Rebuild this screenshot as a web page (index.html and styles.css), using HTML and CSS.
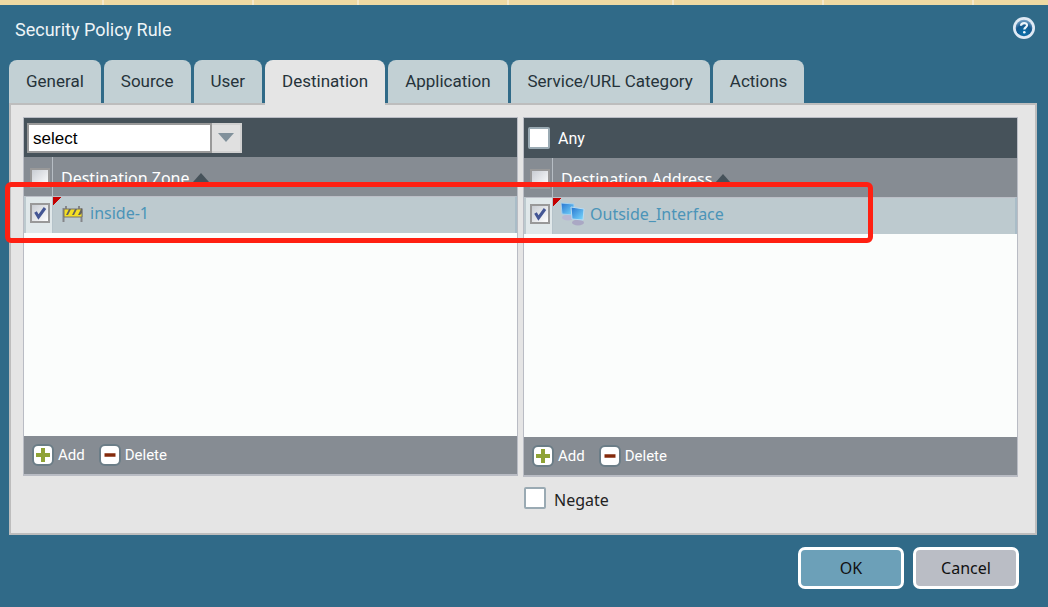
FILE: index.html
```html
<!DOCTYPE html>
<html lang="en">
<head>
<meta charset="utf-8">
<title>Security Policy Rule</title>
<link rel="stylesheet" href="styles.css">
</head>
<body>
<div class="strip"><i class="c1"></i><i class="c2"></i><i class="c3"></i><i class="c2"></i><i class="c4"></i><i class="c2"></i><i class="c2"></i><i class="rest"></i></div>
<main class="dialog">
  <header class="title-bar">
    <h1 class="title">Security Policy Rule</h1>
    <button class="help" type="button" aria-label="Help">
      <svg width="24" height="24" viewBox="0 0 24 24" aria-hidden="true">
        <defs><radialGradient id="hg" cx=".5" cy=".8" r=".8"><stop offset="0" stop-color="#0873ae"/><stop offset=".6" stop-color="#17588c"/><stop offset="1" stop-color="#7fa9cc"/></radialGradient></defs>
        <circle cx="12" cy="12" r="11" fill="#dfe9f4"/><circle cx="12" cy="12" r="8.3" fill="url(#hg)"/>
        <path d="M9 9.700c.2-3.600 6.300-3.400 6-.2-.2 1.900-2.700 1.900-2.700 4" fill="none" stroke="#eef6fc" stroke-width="2.200"/><circle cx="12.300" cy="16.300" r="1.300" fill="#eef6fc"/>
      </svg>
    </button>
  </header>
  <nav class="tabs" role="tablist">
    <button class="tab" role="tab" type="button">General</button>
    <button class="tab" role="tab" type="button">Source</button>
    <button class="tab" role="tab" type="button">User</button>
    <button class="tab active" role="tab" type="button" aria-selected="true">Destination</button>
    <button class="tab" role="tab" type="button">Application</button>
    <button class="tab" role="tab" type="button">Service/URL Category</button>
    <button class="tab" role="tab" type="button">Actions</button>
  </nav>
  <section class="panel">
    <div class="column">
      <div class="grid">
        <div class="toolbar">
          <div class="combo">
            <input class="combo-text" type="text" value="select" aria-label="Zone mode">
            <button class="combo-arrow" type="button" aria-label="Open list"><svg width="16" height="9" viewBox="0 0 16 9"><path d="M0 0h16L8 9z" fill="#81919b"/></svg></button>
          </div>
        </div>
        <table class="list">
          <thead><tr><th class="pick"><input class="check small" type="checkbox" aria-label="Select all zones"></th><th class="name">Destination Zone<svg class="sort" width="16" height="9" viewBox="0 0 16 9"><path d="M0 9L8 0l8 9z" fill="#46525a"/></svg></th></tr></thead>
          <tbody><tr><td class="pick"><input class="check small" type="checkbox" checked aria-label="Select inside-1"></td><td class="name"><div class="entry">
            <svg width="24" height="20" viewBox="0 0 24 20" aria-hidden="true"><path d="M2.500 5v14M20.500 5v14M5 3v4M18 3v4" stroke="#85868a" stroke-width="2" fill="none"/><path d="M3 6h18v8H3z" fill="#f5df22" stroke="#77736a"/><path d="M5 12l3-6h2l-3 6zM11 12l3-6h2l-3 6zM17 12l3-6h1v4l-2 2z" fill="#65635c"/></svg>
            <a class="link" href="#">inside-1</a></div></td></tr></tbody>
        </table>
        <div class="blank"></div>
        <div class="actions">
          <button class="action" type="button"><svg width="24" height="24" viewBox="0 0 24 24"><rect x="2" y="2" width="20" height="20" rx="5" fill="#fff" stroke="#6b7d87" stroke-width="2"/><path d="M12 5v14M5 12h14" stroke="#8fa336" stroke-width="4"/></svg>Add</button>
          <button class="action" type="button"><svg width="24" height="24" viewBox="0 0 24 24"><rect x="2" y="2" width="20" height="20" rx="5" fill="#fff" stroke="#6b7d87" stroke-width="2"/><path d="M6.500 12h11" stroke="#842a0c" stroke-width="3.500"/></svg>Delete</button>
        </div>
      </div>
    </div>
    <div class="column">
      <div class="grid">
        <div class="toolbar tall">
          <label class="any"><input class="check" type="checkbox">Any</label>
        </div>
        <table class="list">
          <thead><tr><th class="pick"><input class="check small" type="checkbox" aria-label="Select all addresses"></th><th class="name">Destination Address<svg class="sort" width="16" height="9" viewBox="0 0 16 9"><path d="M0 9L8 0l8 9z" fill="#46525a"/></svg></th></tr></thead>
          <tbody><tr><td class="pick"><input class="check small" type="checkbox" checked aria-label="Select Outside_Interface"></td><td class="name"><div class="entry">
            <svg width="24" height="24" viewBox="0 0 24 24" aria-hidden="true"><defs><linearGradient id="mg" x2="1" y2="1"><stop stop-color="#2673cf"/><stop offset="1" stop-color="#7cdcff"/></linearGradient></defs><ellipse cx="7" cy="15.500" rx="6" ry="3" fill="#b9b8d3"/><path d="M0 1l13 1v11L1 12z" fill="url(#mg)" stroke="#a5d0ee"/><ellipse cx="17" cy="20.500" rx="6" ry="3" fill="#aaa8c4"/><path d="M10 5l13 2-1 11-11-1z" fill="url(#mg)" stroke="#b9dcf3"/></svg>
            <a class="link" href="#">Outside_Interface</a></div></td></tr></tbody>
        </table>
        <div class="blank"></div>
        <div class="actions">
          <button class="action" type="button"><svg width="24" height="24" viewBox="0 0 24 24"><rect x="2" y="2" width="20" height="20" rx="5" fill="#fff" stroke="#6b7d87" stroke-width="2"/><path d="M12 5v14M5 12h14" stroke="#8fa336" stroke-width="4"/></svg>Add</button>
          <button class="action" type="button"><svg width="24" height="24" viewBox="0 0 24 24"><rect x="2" y="2" width="20" height="20" rx="5" fill="#fff" stroke="#6b7d87" stroke-width="2"/><path d="M6.500 12h11" stroke="#842a0c" stroke-width="3.500"/></svg>Delete</button>
        </div>
      </div>
      <label class="negate"><input class="check" type="checkbox">Negate</label>
    </div>
  </section>
  <footer class="buttons">
    <button class="btn ok" type="button">OK</button>
    <button class="btn" type="button">Cancel</button>
  </footer>
  <div class="highlight"></div>
</main>
</body>
</html>
```
FILE: styles.css
```css
* { box-sizing: border-box; }
body { margin: 0; background: #306a88; font-family: "Noto Sans", sans-serif; font-size: 16px; color: #222; }
button { border: 0; padding: 0; background: none; font: inherit; color: inherit; }
svg { display: block; flex: none; }

.strip { display: flex; height: 5px; background: #eed9a3; }
.strip i { border-right: 2px solid #f5e7c8; }
.strip .c1 { width: 104px; }
.strip .c2 { width: 150px; }
.strip .c3 { width: 105px; }
.strip .c4 { width: 165px; }
.strip .rest { flex: 1; border: 0; }

.dialog { position: relative; padding: 0 11px 18px 9px; }
.title-bar { display: flex; justify-content: space-between; align-items: flex-start; height: 55px; padding: 11px 1px 0 6px; }
.title { margin: 0; font: 18px/28px Roboto, sans-serif; color: #eef4f7; }

.tabs { display: flex; gap: 3px; height: 45px; }
.tab { height: 43px; padding: 0 17px; border-radius: 8px 8px 0 0; background: #c2d0d4; font: 17px/43px Roboto, sans-serif; color: #26333a; white-space: nowrap; }
.tab.active { height: 45px; padding-bottom: 2px; background: #e5e5e5; z-index: 1; }

.panel { display: flex; gap: 5px; margin-top: -2px; min-height: 432px; padding: 12px 17px 22px 12px; border: 2px solid #bdbdbd; background: #e5e5e5; }
.column { flex: 1 1 0; min-width: 0; }
.grid { border: 1px solid #b9bcc4; border-bottom-width: 2px; background: #fbfdfc; }
.toolbar { display: flex; align-items: center; height: 39px; padding-left: 3px; background: #46525a; }
.toolbar.tall { height: 40px; }
.combo { display: flex; width: 215px; height: 30px; }
.combo-text { flex: 1; min-width: 0; border: 2px solid #999; padding: 2px 4px 0; background: #fff; font: 17px "Liberation Sans", sans-serif; color: #000; }
.combo-arrow { display: flex; align-items: center; justify-content: center; width: 30px; border: 2px solid #d0d0d0; border-left: 0; background: #e0e0e0; }
.check { appearance: none; flex: none; width: 22px; height: 22px; margin: 0; border: 2px solid #9aaab3; border-radius: 2px; background: #fff; }
.check.small { display: block; width: 20px; height: 20px; border-color: #999; border-radius: 0; background: linear-gradient(135deg, #c9cdd3, #fff); }
.check.small:checked { background: url("data:image/svg+xml,%3Csvg xmlns='http://www.w3.org/2000/svg' viewBox='0 0 16 16'%3E%3Cpath d='M3.500 7l3 5 6.500-9' fill='none' stroke='%23445694' stroke-width='3'/%3E%3C/svg%3E"), linear-gradient(135deg, #c9cdd3, #fff); }
.any { display: flex; align-items: center; gap: 8px; padding-left: 1px; font: 16px Roboto, sans-serif; color: #fff; }

.list { width: 100%; border-collapse: separate; border-spacing: 0; table-layout: fixed; }
.list th, .list td { padding: 0; text-align: left; vertical-align: middle; }
.list th { height: 39px; background: #868c93; color: #fff; font-weight: 400; }
.list th.pick { width: 29px; padding: 2px 0 0 4px; border-left: 2px solid #868c93; border-right: 1px solid #b6bdc4; }
.list th.name { padding: 3px 0 0 8px; }
.list td { height: 37px; border-top: 1px solid #bcbfc7; background: #bdcacf; }
.list td.pick { padding: 0 0 5px 4px; background: #e0e8ea; border-left: 2px solid #bdcacf; border-right: 1px solid #b5c3ca; }
.list td.name { padding: 0 0 4px 8px; border-right: 2px solid #a9bcc7; background: linear-gradient(135deg, #c40000 6px, transparent 6px) no-repeat, #bdcacf; }
.sort { display: inline-block; margin-left: 3px; vertical-align: 2px; }
.entry { display: flex; align-items: center; gap: 5px; }
.link { color: #4b94b8; text-decoration: none; }
.blank { height: 203px; }
.actions { display: flex; align-items: center; gap: 13px; height: 38px; padding-left: 7px; background: #868c93; }
.action { display: flex; align-items: center; gap: 3px; font: 15px Roboto, sans-serif; color: #fff; }
.negate { display: flex; align-items: flex-end; gap: 8px; width: max-content; padding: 10px 0 0 1px; line-height: 18px; }

.buttons { display: flex; justify-content: flex-end; gap: 9px; padding: 12px 18px 0 0; }
.btn { width: 106px; height: 42px; border: 3px solid #fff; border-radius: 7px; background: #babdc5; color: #111; }
.btn.ok { background: #6ca0b8; }
.highlight { position: absolute; z-index: 2; left: 5px; top: 177px; width: 868px; height: 61px; border: 5px solid #ff2012; border-radius: 6px; pointer-events: none; }
```
